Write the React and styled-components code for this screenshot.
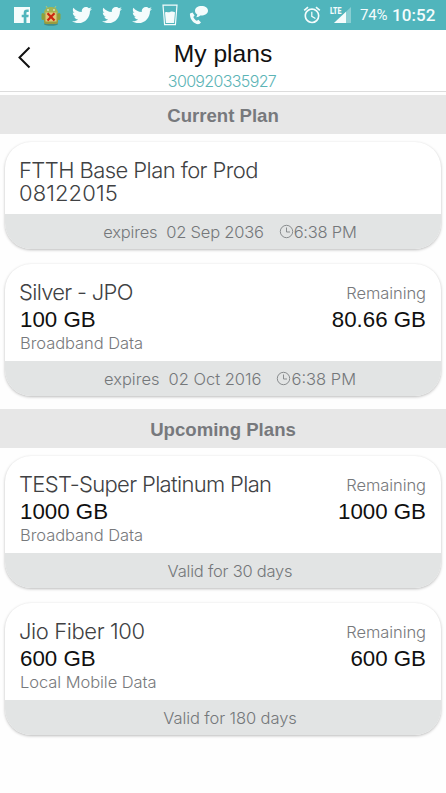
import React from 'react';
import styled, { createGlobalStyle } from 'styled-components';
import { FaTwitter } from 'react-icons/fa';
import { MdAlarm } from 'react-icons/md';

const GlobalStyle = createGlobalStyle`
  * { box-sizing: border-box; }
  body { margin: 0; background: #fefefe; }
`;

const sans = '"Liberation Sans", Arial, sans-serif';
const light = 'Inter, "Liberation Sans", sans-serif';

const Screen = styled.div`
  width: 446px;
  height: 793px;
  overflow: hidden;
  background: #fefefe;
  font-family: ${sans};
`;

const StatusBar = styled.div`
  height: 30px;
  padding: 0 11px 0 13px;
  display: flex;
  justify-content: space-between;
  align-items: center;
  background: #50b5bc;
  color: #f4fcfc;
`;

const StatusIcons = styled.div`
  display: flex;
  align-items: center;
  height: 30px;
  gap: 7px;
  svg { display: block; flex: none; }
`;

const Notifications = styled(StatusIcons)`
  gap: 10.3px;
`;

const Battery = styled.span`
  width: 28px;
  font: 400 15px Roboto, sans-serif;
  letter-spacing: -0.2px;
  white-space: nowrap;
`;

const Clock = styled.span`
  margin-left: -3px;
  width: 43px;
  font: 500 17px Roboto, sans-serif;
  letter-spacing: 0.1px;
  white-space: nowrap;
`;

const Header = styled.header`
  height: 62px;
  display: grid;
  grid-template-columns: 48px 1fr 48px;
  border-bottom: 1px solid #dcdcdc;
  background: #fff;
`;

const BackButton = styled.button`
  display: flex;
  align-items: flex-start;
  padding: 16px 0 0 17px;
  border: 0;
  background: none;
`;

const Heading = styled.div`
  text-align: center;
  padding-top: 10px;
`;

const Title = styled.h1`
  margin: 0;
  font-size: 24.6px;
  font-weight: 400;
  line-height: 28px;
  color: #111;
`;

const AccountNumber = styled.div`
  font: 300 16px/20px ${light};
  letter-spacing: -0.65px;
  margin: 3px 2px 0 0;
  color: #5cb4b6;
`;

const SectionTitle = styled.h2`
  margin: ${p => p.$top}px 0 0;
  height: 39px;
  background: #e7e7e7;
  color: #77797d;
  font-size: 18.6px;
  font-weight: 700;
  line-height: 41px;
  text-align: center;
`;

const Card = styled.article`
  margin: ${p => p.$top}px 5px 0;
  height: ${p => p.$height}px;
  display: flex;
  flex-direction: column;
  border-radius: 26px;
  overflow: hidden;
  background: #fff;
  box-shadow: 0 1px 3px rgba(0, 0, 0, 0.27);
`;

const CardBody = styled.div`
  flex: 1;
  display: flex;
  justify-content: space-between;
  padding: 17px 15px 0 14px;
`;

const Usage = styled.div`
  text-align: ${p => p.$align || 'left'};
`;

const PlanName = styled.div`
  font: 300 22px/23px ${light};
  letter-spacing: 0.1px;
  white-space: pre-line;
  color: #404143;
  &::first-line { letter-spacing: ${p => p.$spacing}px; }
`;

const Amount = styled.div`
  font-size: 22.3px;
  line-height: 26px;
  margin-top: 3px;
  padding-left: 1px;
  color: #101010;
`;

const Caption = styled.div`
  padding-left: 1px;
  font: 300 16.5px/21px ${light};
  letter-spacing: -0.06px;
  color: #77797c;
`;

const Remaining = styled(Caption)`
  line-height: 24px;
  margin-bottom: -1px;
`;

const CardFooter = styled.footer`
  height: 35px;
  flex: none;
  display: flex;
  justify-content: center;
  align-items: center;
  padding: 1px 0 0 14px;
  background: #e2e4e4;
  color: #74777a;
  font: 300 16.5px/34px ${light};
  letter-spacing: ${p => p.$spacing ?? -0.22}px;
`;

const ExpiryDate = styled.span`
  margin: 0 15px 0 9px;
`;

const FacebookIcon = () => (
  <svg width="18" height="18" viewBox="0 0 18 18">
    <path fill="currentColor" fillRule="evenodd" d="M1 1h16v16h-3.600v-5.700h2l.3-2.600h-2.300V7.100c0-.8.3-1.100 1.100-1.100h1.200V3.600c-3.600-.5-5 .7-5 3.200v1.900h-2v2.600h2V17H1z" />
  </svg>
);

const DebugIcon = () => (
  <svg width="20" height="21" viewBox="0 0 20 21">
    <ellipse cx="10" cy="19" rx="7" ry="1.7" fill="#3c7b72" opacity=".7" />
    <path d="M5 1l2 3M15 1l-2 3" stroke="#b9c96b" strokeWidth="1" />
    <path d="M3 8c0-8 14-8 14 0z" fill="#a4b552" />
    <rect x="0.500" y="8" width="3" height="7" rx="1.5" fill="#8da23b" />
    <rect x="16.500" y="8" width="3" height="7" rx="1.5" fill="#8da23b" />
    <rect x="3" y="8" width="14" height="11" rx="2" fill="#9a9c3e" />
    <rect x="4.5" y="7.500" width="11" height="9" fill="#e0c878" />
    <circle cx="7" cy="5" r=".8" fill="#fff" /><circle cx="13" cy="5" r=".8" fill="#fff" />
    <path d="M6.500 8.300l7 7.200m0-7.200l-7 7.200" stroke="#cb2611" strokeWidth="2.2" />
  </svg>
);

const GlassIcon = () => (
  <svg width="16" height="22" viewBox="0 0 16 22">
    <path d="M1 1.200h14l-1.600 19.500H2.600z" fill="none" stroke="currentColor" strokeWidth="1.2" />
    <path d="M3 8.500c2-1.300 3 .2 5-.5s3-.4 5 .3l-.9 10.700H3.900z" fill="currentColor" />
  </svg>
);

const CallChatIcon = () => (
  <svg width="20" height="20" viewBox="0 0 20 20">
    <path fill="currentColor" d="M12.500 1C8.800 1 6 3 6 5.800c0 1.700.9 3 2.300 3.800-.1 1-.5 1.900-1.100 2.700 1.700-.3 3-.9 4-1.900 4.300.2 7.800-1.600 7.800-4.700C19 2.900 16.200 1 12.500 1z" />
    <path fill="currentColor" d="M1 8.500l2.500-1 2.100 3-1.300 1.400c.8 1.700 2 3 3.600 3.900l1.500-1 2.600 2.600-1.700 1.600C6 20.200.300 14.500 1 8.500z" />
  </svg>
);

const SignalIcon = () => (
  <svg width="24" height="20" viewBox="0 0 24 20">
    <text x="1" y="8.500" fontFamily="Roboto" fontWeight="900" fontSize="9.500" textLength="11.500" lengthAdjust="spacingAndGlyphs" fill="currentColor">LTE</text>
    <path d="M22 2v16H5z" fill="currentColor" opacity=".35" />
    <path d="M17 6.700V18H5z" fill="currentColor" />
  </svg>
);

const BackIcon = () => (
  <svg width="14" height="23" viewBox="0 0 14 23">
    <path d="M12.500 1.500L2.500 11.500l10 10" fill="none" stroke="#111" strokeWidth="2" />
  </svg>
);

const TimeSvg = styled.svg`
  flex: none;
  margin-top: -2px;
`;

const TimeIcon = () => (
  <TimeSvg width="15" height="15" viewBox="0 0 15 15">
    <circle cx="7.500" cy="7.500" r="6.200" fill="none" stroke="#898c8e" />
    <path d="M7.500 3.500V8H11" fill="none" stroke="#898c8e" />
  </TimeSvg>
);

const Expiry = ({ date, time, spacing }) => (
  <CardFooter $spacing={spacing}>
    <span>expires</span>
    <ExpiryDate>{date}</ExpiryDate>
    <TimeIcon />
    <span>{time}</span>
  </CardFooter>
);

const PlanCard = ({ top, height, name, spacing, total, remaining, kind, children }) => (
  <Card $top={top} $height={height}>
    <CardBody>
      <Usage>
        <PlanName $spacing={spacing}>{name}</PlanName>
        {total && <Amount>{total}</Amount>}
        {kind && <Caption>{kind}</Caption>}
      </Usage>
      {remaining && (
        <Usage $align="right">
          <Remaining>Remaining</Remaining>
          <Amount>{remaining}</Amount>
        </Usage>
      )}
    </CardBody>
    {children}
  </Card>
);

export default function App() {
  return (
    <Screen>
      <GlobalStyle />
      <StatusBar>
        <Notifications>
          <FacebookIcon />
          <DebugIcon />
          <FaTwitter size={20} />
          <FaTwitter size={20} />
          <FaTwitter size={20} />
          <GlassIcon />
          <CallChatIcon />
        </Notifications>
        <StatusIcons>
          <MdAlarm size={20} />
          <SignalIcon />
          <Battery>74%</Battery>
          <Clock>10:52</Clock>
        </StatusIcons>
      </StatusBar>
      <Header>
        <BackButton aria-label="Back"><BackIcon /></BackButton>
        <Heading>
          <Title>My plans</Title>
          <AccountNumber>300920335927</AccountNumber>
        </Heading>
      </Header>
      <main>
        <SectionTitle $top={3}>Current Plan</SectionTitle>
        <PlanCard top={8} height={107} spacing={-0.57} name={'FTTH Base Plan for Prod\n08122015'}>
          <Expiry date="02 Sep 2036" time="6:38 PM" />
        </PlanCard>
        <PlanCard top={15} height={132} spacing={-0.7} name="Silver - JPO" total="100 GB" remaining="80.66 GB" kind="Broadband Data">
          <Expiry date="02 Oct 2016" time="6:38 PM" spacing={0} />
        </PlanCard>
        <SectionTitle $top={13}>Upcoming Plans</SectionTitle>
        <PlanCard top={8} height={132} spacing={-0.66} name="TEST-Super Platinum Plan" total="1000 GB" remaining="1000 GB" kind="Broadband Data">
          <CardFooter>Valid for 30 days</CardFooter>
        </PlanCard>
        <PlanCard top={15} height={132} spacing={-0.4} name="Jio Fiber 100" total="600 GB" remaining="600 GB" kind="Local Mobile Data">
          <CardFooter $spacing={-0.1}>Valid for 180 days</CardFooter>
        </PlanCard>
      </main>
    </Screen>
  );
}
